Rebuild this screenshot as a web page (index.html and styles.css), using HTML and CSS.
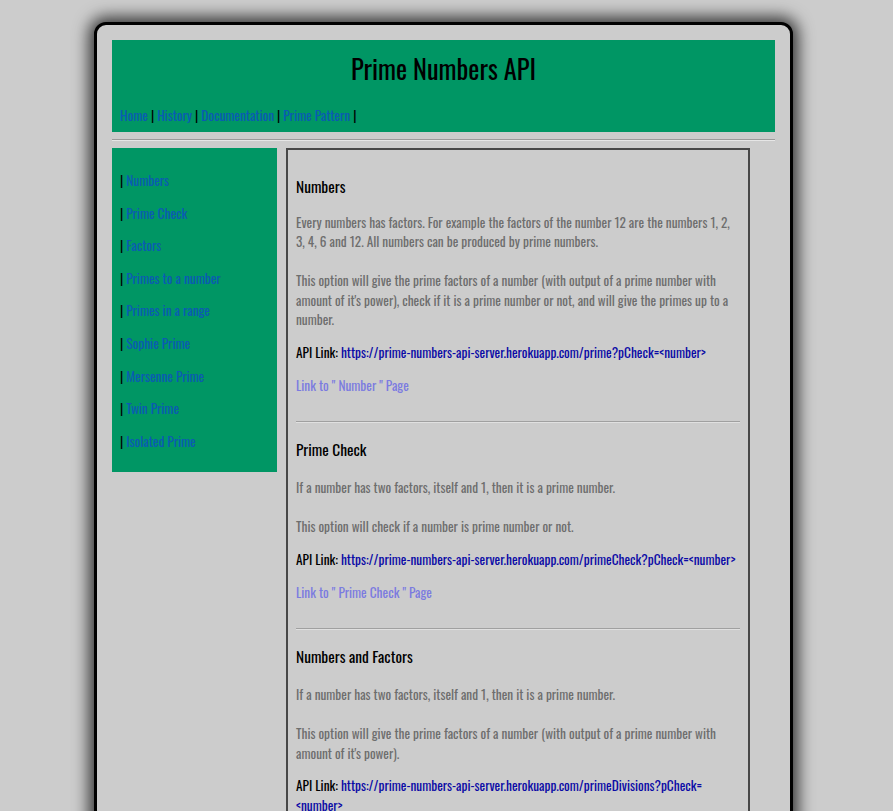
FILE: index.html
```html
<!DOCTYPE html>
<html lang="en">
<head>
<meta charset="utf-8">
<title>Prime Numbers API</title>
<link rel="stylesheet" href="styles.css">
</head>
<body>
<div class="page">
  <header class="header">
    <h1 class="title">Prime Numbers API</h1>
    <nav class="nav"><a href="#">Home</a> | <a href="#">History</a> | <a href="#">Documentation</a> | <a href="#">Prime Pattern</a> |</nav>
  </header>
  <hr class="rule">
  <div class="row">
    <aside class="side">
      <div class="side-item">| <a href="#">Numbers</a></div>
      <div class="side-item">| <a href="#">Prime Check</a></div>
      <div class="side-item">| <a href="#">Factors</a></div>
      <div class="side-item">| <a href="#">Primes to a number</a></div>
      <div class="side-item">| <a href="#">Primes in a range</a></div>
      <div class="side-item">| <a href="#">Sophie Prime</a></div>
      <div class="side-item">| <a href="#">Mersenne Prime</a></div>
      <div class="side-item">| <a href="#">Twin Prime</a></div>
      <div class="side-item">| <a href="#">Isolated Prime</a></div>
    </aside>
    <main class="main">
      <section class="sec">
        <h3 class="sec-title">Numbers</h3>
        <p class="desc">Every numbers has factors. For example the factors of the number 12 are the numbers 1, 2, 3, 4, 6 and 12. All numbers can be produced by prime numbers.<br><br>This option will give the prime factors of a number (with output of a prime number with amount of it's power), check if it is a prime number or not, and will give the primes up to a number.</p>
        <p class="api">API Link: <a class="api-url" href="#">https://prime-numbers-api-server.herokuapp.com/prime?pCheck=&lt;number&gt;</a></p>
        <p class="page-link"><a href="#">Link to " Number " Page</a></p>
      </section>
      <hr class="sec-rule">
      <section class="sec">
        <h3 class="sec-title">Prime Check</h3>
        <p class="desc">If a number has two factors, itself and 1, then it is a prime number.<br><br>This option will check if a number is prime number or not.</p>
        <p class="api">API Link: <a class="api-url" href="#">https://prime-numbers-api-server.herokuapp.com/primeCheck?pCheck=&lt;number&gt;</a></p>
        <p class="page-link"><a href="#">Link to " Prime Check " Page</a></p>
      </section>
      <hr class="sec-rule">
      <section class="sec">
        <h3 class="sec-title">Numbers and Factors</h3>
        <p class="desc">If a number has two factors, itself and 1, then it is a prime number.<br><br>This option will give the prime factors of a number (with output of a prime number with amount of it's power).</p>
        <p class="api">API Link: <a class="api-url" href="#">https://prime-numbers-api-server.herokuapp.com/primeDivisions?pCheck=&lt;number&gt;</a></p>
        <p class="page-link"><a href="#">Link to " Numbers and Factors " Page</a></p>
      </section>
    </main>
  </div>
</div>
</body>
</html>
```
FILE: styles.css
```css
html, body {
  margin: 0;
  padding: 0;
  background: #cccccc;
}
body {
  font-family: "Oswald", "Open Sans", sans-serif;
  font-stretch: 75%;
  overflow: hidden;
  height: 811px;
}
a {
  text-decoration: none;
}
.page {
  box-sizing: border-box;
  width: 699px;
  min-height: 900px;
  margin: 22px 0 0 94px;
  padding: 15px;
  border: 3px solid #000;
  border-radius: 12px;
  background: #cccccc;
  box-shadow: 0 0 16px 5px rgba(0, 0, 0, 0.75);
}
.header {
  background: #009664;
  padding: 11px 8px 7px;
}
.title {
  margin: 0;
  text-align: center;
  font-size: 26.4px;
  line-height: 36px;
  font-weight: 400;
  color: #000;
}
.nav {
  margin-top: 18px;
  font-size: 13.33px;
  line-height: 20px;
  font-weight: 400;
  color: #000;
}
.nav a, .side a {
  color: #0b5ab4;
}
.rule {
  margin: 7px 0 7px;
  border: 0;
  border-top: 1px solid #9a9a9a;
  border-bottom: 1px solid #e6e6e6;
}
.row {
  display: flex;
  align-items: flex-start;
  gap: 9px;
}
.side {
  flex: 0 0 165px;
  box-sizing: border-box;
  background: #009664;
  padding: 22px 8px 21px;
  display: flex;
  flex-direction: column;
  gap: 12.6px;
}
.side-item {
  font-size: 13.33px;
  line-height: 20px;
  font-weight: 400;
  color: #000;
}
.main {
  box-sizing: border-box;
  width: 464px;
  border: 2px solid #474747;
  padding: 7px 8px 0;
}
.sec-title {
  margin: 15px 0 18px;
  font-size: 15.4px;
  line-height: 22px;
  font-weight: 400;
  color: #000;
}
.sec:first-child .sec-title {
  margin-top: 18px;
  margin-bottom: 16px;
}
.desc, .api, .page-link {
  margin: 13.5px 0;
  font-size: 13.33px;
  line-height: 19.4px;
}
.desc {
  font-size: 13.3px;
  font-weight: 400;
  color: #6e6e6e;
}
.api {
  color: #000;
  font-weight: 400;
}
.api-url {
  color: #0a0aa6;
  font-weight: 400;
}
.page-link a {
  color: #7b7be0;
  font-weight: 400;
}
.sec-rule {
  margin: 26px 0 0;
  border: 0;
  border-top: 1px solid #a0a0a0;
  border-bottom: 1px solid #e0e0e0;
}
```
